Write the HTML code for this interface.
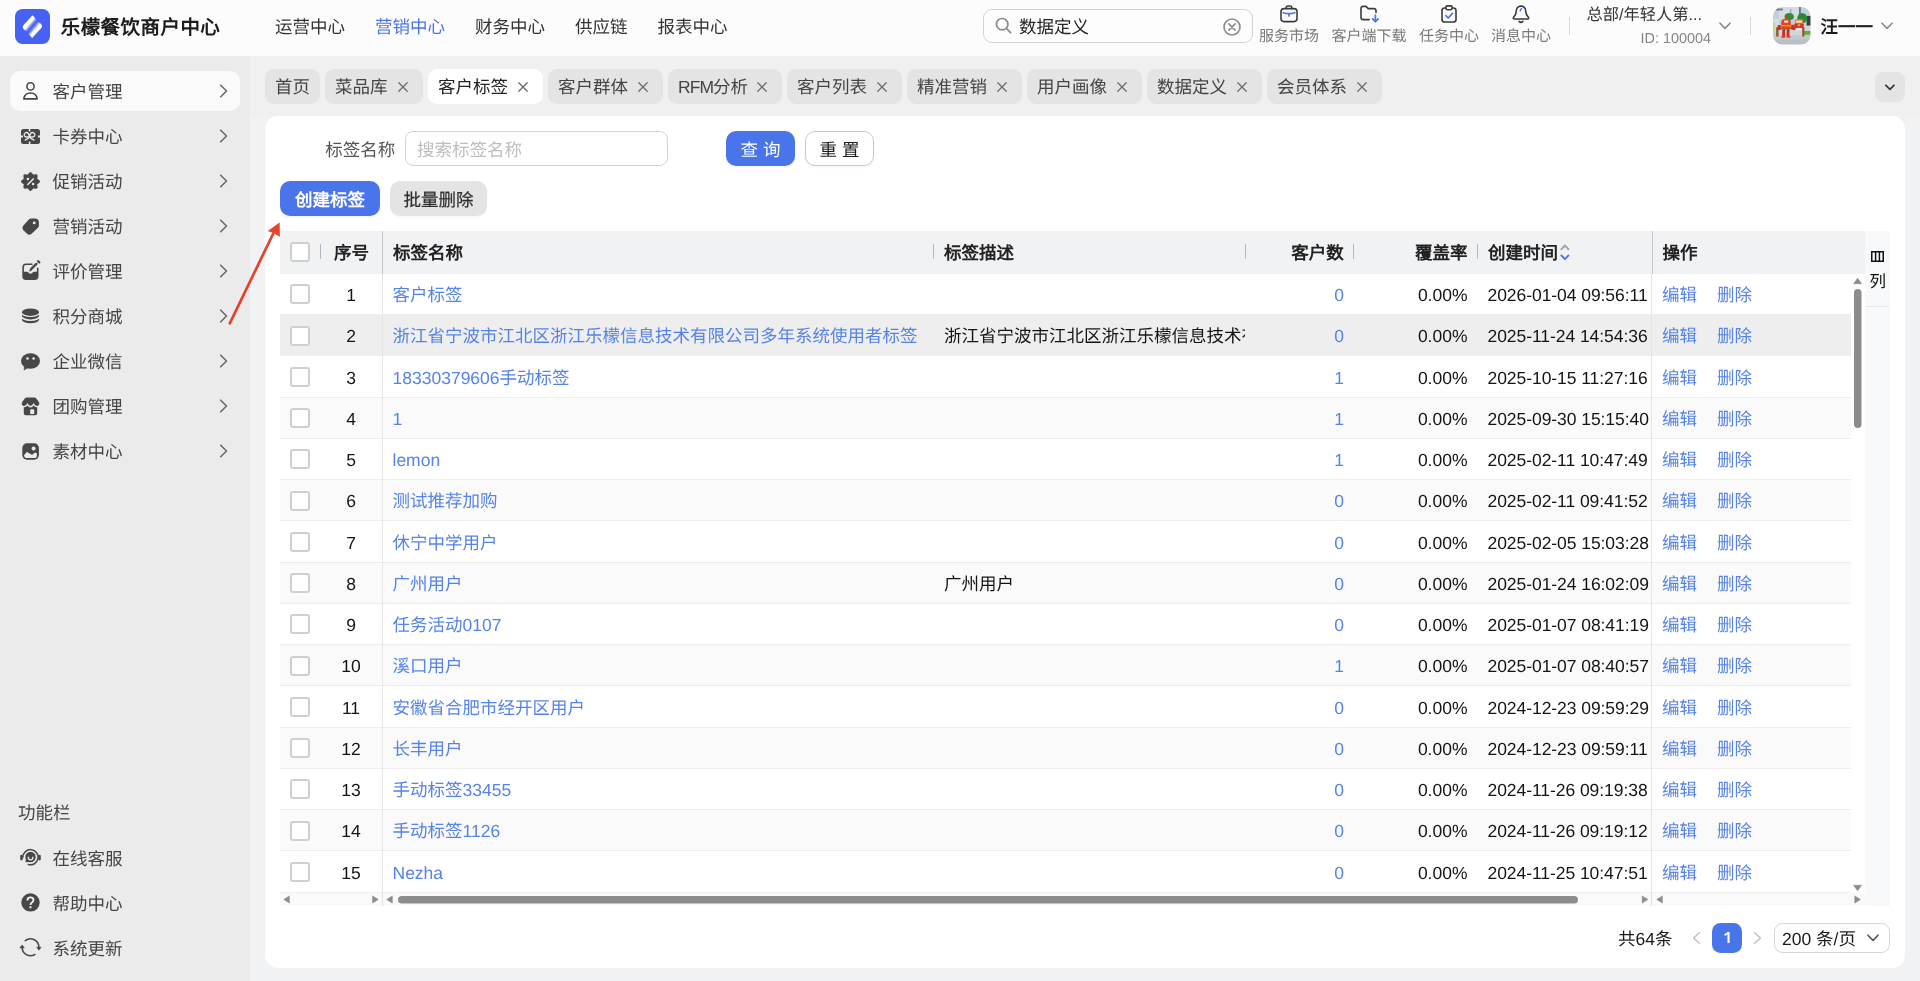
<!DOCTYPE html>
<html lang="zh-CN">
<head>
<meta charset="utf-8">
<title>乐檬餐饮商户中心</title>
<style>
*{box-sizing:border-box;margin:0;padding:0}
html,body{width:1920px;height:981px;overflow:hidden}
body{text-rendering:geometricPrecision;position:relative;background:#f1f2f4;font-family:"Liberation Sans",sans-serif;font-size:17.5px;line-height:20px;color:#1a1a1a}
#wrap{position:absolute;left:0;top:0;width:1920px;height:981px;will-change:transform}
.abs,#wrap>div,#wrap>span,#wrap>svg,#wrap>i{position:absolute}
span{white-space:nowrap}
svg{display:block;overflow:visible}
/* header */
#hdr{left:0;top:0;width:1920px;height:56px;background:#fcfcfc}
#logo{left:15px;top:9px;width:35px;height:35px}
#title{left:60.7px;top:16.4px;font-size:19.5px;line-height:24px;font-weight:bold;color:#1c1c1c;letter-spacing:0.45px}
.nav{top:17px;font-size:17.5px;line-height:20px;color:#333}
.nav.on{color:#4a74ea}
#search{left:983px;top:9px;width:270px;height:34px;border:1px solid #d4d4d4;border-radius:9px;background:#fdfdfd}
.hic{top:29px;font-size:15px;line-height:16px;color:#7a7a7a;text-align:center}
.vdiv{width:1px;height:18px;top:17px;background:#d9d9d9}
/* sidebar */
#side{left:0;top:56px;width:250px;height:925px;background:#ebebeb}
.mi{left:10px;width:230px;height:40px;border-radius:10px}
.mi.on{background:#fafafa}
.mi span{position:absolute;left:42.6px;top:11px;color:#444;font-size:17.5px;line-height:20px}
.mi svg.ic{position:absolute;left:10px;top:10px;width:20px;height:20px}
.mi svg.ch{position:absolute;left:209px;top:13px;width:8px;height:14px}
/* tabs */
#tabbar{left:250px;top:56px;width:1670px;height:60px;background:#f0f0f0}
.tab{top:69px;height:35px;border-radius:9px;background:#e4e4e4;color:#444}
.tab.on{background:#fff;color:#222}
.tab span{position:absolute;left:10px;top:7.5px;font-size:17.5px;line-height:20px}
.tab svg{position:absolute;right:14.6px;top:12.5px;width:10px;height:10px}
/* card */
#card{left:265px;top:116px;width:1640px;height:851.5px;background:#fff;border-radius:13px}
.btn{height:35px;border-radius:10px;text-align:center;font-size:17.5px;line-height:35px;padding-top:1.75px}
.pri{background:#4a74ea;color:#fff}
/* table */
#thead{left:280px;top:231px;width:1585px;height:42.75px;background:#f1f2f4}
.th{top:242.5px;font-weight:bold;font-size:17.5px;line-height:20px;color:#222}
.sep{top:244px;width:1px;height:15px;background:#b3b7c6}
.row{left:280px;width:1571px;height:41.25px;border-bottom:1px solid #eeeeee;background:#fff}
.row.alt{background:#fafafa}
.row.hov{background:#eeeeee}
.row span{position:absolute;top:11.25px;line-height:20px;font-size:17.5px;color:#141414}
.row .lk,.lk{color:#5683ea}
.cb{position:absolute;display:block;left:10px;top:10.5px;width:20px;height:20px;border:2px solid #cfcfcf;border-radius:3px;background:#fff}
.c-idx{left:40px;width:62px;text-align:center}
.c-name{left:112.5px}
.c-desc{left:664px;width:301px;overflow:hidden}
.c-cnt{left:966px;width:98px;text-align:right}
.c-rate{left:1073.5px;width:114px;text-align:right}
.c-date{left:1207.5px;letter-spacing:-0.06px}
.c-edit{left:1382px}
.c-del{left:1437px}
.vline{width:1px}

</style>
</head>
<body>
<div id="wrap">
<div id="hdr"></div>
<svg id="logo" viewBox="0 0 35 35">
  <defs>
    <linearGradient id="lg1" gradientUnits="userSpaceOnUse" x1="9.6" y1="15.6" x2="14.4" y2="19.6"><stop offset="0.5" stop-color="#fff"/><stop offset="0.68" stop-color="#fff" stop-opacity="0.6"/><stop offset="1" stop-color="#fff" stop-opacity="0.12"/></linearGradient>
    <linearGradient id="lg2" gradientUnits="userSpaceOnUse" x1="25.1" y1="19.6" x2="20.3" y2="15.6"><stop offset="0.5" stop-color="#fff"/><stop offset="0.68" stop-color="#fff" stop-opacity="0.6"/><stop offset="1" stop-color="#fff" stop-opacity="0.12"/></linearGradient>
  </defs>
  <rect width="35" height="35" rx="7.6" fill="#4762f2"/>
  <path d="M17.1 6.7 Q17.6 6.3 18.1 6.8 L21.2 10.4 Q21.7 11 21.2 11.6 L13.2 21.8 Q12.2 22.9 11.0 22.1 Q5.8 18.6 8.6 15.9 Z" fill="url(#lg1)"/>
  <path d="M17.6 28.5 Q17.1 28.9 16.6 28.4 L13.5 24.8 Q13 24.2 13.5 23.6 L21.5 13.4 Q22.5 12.3 23.7 13.1 Q28.9 16.6 26.1 19.3 Z" fill="url(#lg2)"/>
</svg>
<span id="title">乐檬餐饮商户中心</span>
<span class="nav" style="left:275px">运营中心</span>
<span class="nav on" style="left:375px">营销中心</span>
<span class="nav" style="left:475px">财务中心</span>
<span class="nav" style="left:575px">供应链</span>
<span class="nav" style="left:657.5px">报表中心</span>

<div id="search"></div>
<svg style="left:995px;top:17px;width:17px;height:17px" viewBox="0 0 17 17" fill="none" stroke="#8a8a8a" stroke-width="1.7" stroke-linecap="round"><circle cx="7.2" cy="7.2" r="5.7"/><path d="M11.6 11.6 L15.6 15.6"/></svg>
<span style="left:1019px;top:17px;font-size:17.5px;line-height:20px;color:#262626">数据定义</span>
<svg style="left:1223px;top:18px;width:18px;height:18px" viewBox="0 0 18 18" fill="none" stroke="#8f8f8f" stroke-width="1.7" stroke-linecap="round"><circle cx="9" cy="9" r="8"/><path d="M5.9 5.9 L12.1 12.1 M12.1 5.9 L5.9 12.1"/></svg>

<!-- header icon buttons -->
<svg style="left:1280px;top:5px;width:18px;height:18px" viewBox="0 0 18 18" fill="none" stroke-linecap="round" stroke-linejoin="round">
  <path d="M6.2 3.6 V2.6 Q6.2 1 7.8 1 H10.2 Q11.8 1 11.8 2.6 V3.6" stroke="#3a3a3a" stroke-width="1.6"/>
  <rect x="1" y="3.6" width="16" height="13" rx="3" stroke="#3a3a3a" stroke-width="1.6"/>
  <path d="M3.2 7.8 Q9 9.6 14.8 7.8 M9 9 V11" stroke="#4a74ea" stroke-width="1.7"/>
</svg>
<span class="hic" style="left:1259px;width:60px">服务市场</span>

<svg style="left:1360px;top:5px;width:19px;height:18px" viewBox="0 0 19 18" fill="none" stroke-linecap="round" stroke-linejoin="round">
  <path d="M9.2 14.6 H3.4 Q1 14.6 1 12.2 V3.6 Q1 1.4 3.2 1.4 H6 L8.2 3.6 H13.8 Q16 3.6 16 5.8 V7.4" stroke="#3a3a3a" stroke-width="1.6"/>
  <path d="M15.4 10 V16.4 M12.6 13.8 L15.4 16.6 L18.2 13.8" stroke="#4a74ea" stroke-width="1.7"/>
</svg>
<span class="hic" style="left:1331.5px;width:75px">客户端下载</span>

<svg style="left:1441px;top:5px;width:16px;height:18px" viewBox="0 0 16 18" fill="none" stroke-linecap="round" stroke-linejoin="round">
  <rect x="1" y="3" width="14" height="14" rx="2.6" stroke="#3a3a3a" stroke-width="1.6"/>
  <rect x="4.8" y="0.9" width="6.4" height="3.8" rx="1.6" stroke="#3a3a3a" stroke-width="1.6" fill="#fcfcfc"/>
  <path d="M4.8 10.6 L7.2 13 L11.4 8.4" stroke="#4a74ea" stroke-width="1.7"/>
</svg>
<span class="hic" style="left:1419px;width:60px">任务中心</span>

<svg style="left:1512px;top:5px;width:18px;height:19px" viewBox="0 0 18 19" fill="none" stroke-linecap="round" stroke-linejoin="round">
  <path d="M9 1 Q13.6 1.4 13.8 6.6 Q13.9 10.2 16.6 12.6 Q17 14 15.6 14 H2.4 Q1 14 1.4 12.6 Q4.1 10.2 4.2 6.6 Q4.4 1.4 9 1 Z" stroke="#3a3a3a" stroke-width="1.6"/>
  <path d="M7.2 16.4 Q9 18.4 10.8 16.4" stroke="#3a3a3a" stroke-width="1.6"/>
  <path d="M9.6 3.6 Q8.4 4.4 8.2 5.8" stroke="#4a74ea" stroke-width="1.5"/>
</svg>
<span class="hic" style="left:1491px;width:60px">消息中心</span>

<div class="vdiv" style="left:1569px"></div>
<span style="left:1586.5px;top:6px;font-size:16.25px;line-height:18px;color:#333">总部/年轻人第...</span>
<span style="left:1611px;width:100px;text-align:right;top:30.5px;font-size:14.4px;line-height:17px;color:#858585">ID: 100004</span>
<svg style="left:1719px;top:22px;width:12px;height:8px" viewBox="0 0 12 8" fill="none" stroke="#8a8a8a" stroke-width="1.6" stroke-linecap="round" stroke-linejoin="round"><path d="M1 1.2 L6 6.4 L11 1.2"/></svg>
<div class="vdiv" style="left:1750px"></div>

<!-- avatar -->
<svg style="left:1773px;top:7px;width:37.5px;height:37.5px" viewBox="0 0 38 38">
  <defs><clipPath id="avc"><rect width="38" height="38" rx="9.5"/></clipPath><filter id="avb" x="-5%" y="-5%" width="110%" height="110%"><feGaussianBlur stdDeviation="0.45"/></filter></defs>
  <g clip-path="url(#avc)"><g filter="url(#avb)">
    <rect x="-2" y="-2" width="42" height="42" fill="#bfd0da"/>
    <rect x="6" y="0" width="22" height="12" fill="#d3dde3"/>
    <rect x="-2" y="12" width="8" height="12" fill="#d5dfe3"/>
    <rect x="3" y="1.5" width="7" height="2" fill="#6f7a82"/>
    <rect x="26.5" y="0" width="1.6" height="9" fill="#59636a"/>
    <rect x="17.5" y="2" width="1" height="6" fill="#8b979e"/>
    <rect x="34" y="9" width="6" height="10" fill="#3d4248"/>
    <rect x="32" y="19" width="8" height="6" fill="#cfd6d8"/>
    <ellipse cx="16.4" cy="9.8" rx="4.8" ry="3.8" fill="#2f8c3a"/>
    <ellipse cx="29.6" cy="11.2" rx="5" ry="5.2" fill="#2d8737"/>
    <rect x="-1" y="15.5" width="3.2" height="9" fill="#bcd88e"/>
    <rect x="-2" y="28.8" width="42" height="12" fill="#c2c8cb"/>
    <rect x="-2" y="33" width="42" height="8" fill="#b9c0c4"/>
    <rect x="31.5" y="24.3" width="8" height="3.8" fill="#5fae3a"/>
    <rect x="4" y="24" width="27" height="4.6" fill="#d4d4d2"/>
    <rect x="3.2" y="20.5" width="2.4" height="9.4" fill="#8a5a2a"/>
    <rect x="29.6" y="20.5" width="2.2" height="9.4" fill="#8a5a2a"/>
    <rect x="5" y="21" width="25" height="1.6" fill="#9a6a34"/>
    <!-- right robot -->
    <rect x="22.2" y="12.4" width="8.2" height="5" rx="1.5" fill="#ea8a3c"/>
    <rect x="23.4" y="14" width="5.8" height="1.8" fill="#f3ece4"/>
    <rect x="21.6" y="16.6" width="9.4" height="5.4" rx="1" fill="#d2302a"/>
    <rect x="25" y="17.4" width="2.6" height="2.2" fill="#e8a32a"/>
    <rect x="22.8" y="21.2" width="6.6" height="2.6" fill="#efeae4"/>
    <rect x="19.6" y="19.6" width="3" height="3.6" fill="#cf2a28"/>
    <!-- left robot -->
    <rect x="12.3" y="8.2" width="2.6" height="3.6" fill="#d83a2a"/>
    <path d="M8.4 15.6 Q8.4 11.8 13.2 11.8 Q18 11.8 18 15.6 V21.4 Q18 22.8 16.6 22.8 H9.8 Q8.4 22.8 8.4 21.4Z" fill="#e2421a"/>
    <rect x="11.2" y="13.7" width="4.2" height="2.2" rx="0.6" fill="#f4efe8"/>
    <rect x="8.4" y="18.2" width="9.6" height="1.5" fill="#eaa324"/>
    <rect x="4.6" y="18.2" width="3.4" height="5" rx="1" fill="#d42a24"/>
    <rect x="18.4" y="18" width="3" height="4.6" rx="1" fill="#d42a24"/>
    <rect x="9.6" y="22.8" width="2.6" height="2.4" fill="#4a4a4a"/><rect x="14" y="22.8" width="2.6" height="2.4" fill="#4a4a4a"/>
    <rect x="9.3" y="24.8" width="3" height="5.2" fill="#d9261f"/><rect x="13.8" y="24.8" width="2.9" height="5.2" fill="#d9261f"/>
    <rect x="8.4" y="29.6" width="4.2" height="1.5" rx="0.7" fill="#ea3220"/><rect x="13.6" y="29.6" width="4.2" height="1.5" rx="0.7" fill="#ea3220"/>
  </g></g>
</svg>
<span style="left:1820.5px;top:17.3px;font-size:17.5px;line-height:20px;font-weight:bold;color:#1c1c1c">汪一一</span>
<svg style="left:1881px;top:22px;width:12px;height:8px" viewBox="0 0 12 8" fill="none" stroke="#8a8a8a" stroke-width="1.6" stroke-linecap="round" stroke-linejoin="round"><path d="M1 1.2 L6 6.4 L11 1.2"/></svg>

<div id="side"></div>
<div class="mi on" style="top:71px"><svg class="ic" viewBox="-0.5 0 20 20"><circle cx="10" cy="5.4" r="3.6" fill="none" stroke="#474747" stroke-width="1.6"/><path d="M3.3 17.9 C3.8 14 6.5 12 10 12 C13.5 12 16.2 14 16.7 17.9 Z" fill="none" stroke="#474747" stroke-width="1.6" stroke-linejoin="round"/></svg><span>客户管理</span><svg class="ch" viewBox="-0.7 0 8 14" fill="none" stroke="#6a6a6a" stroke-width="1.6" stroke-linecap="round" stroke-linejoin="round"><path d="M1 1.2 L6.8 7 L1 12.8"/></svg></div>
<div class="mi" style="top:116px"><svg class="ic" viewBox="-0.5 0 20 20"><path d="M3 3 H8.3 V5.4 H9.9 V3 H17 Q19.5 3 19.5 5.5 V9.4 H17.5 V11.6 H19.5 V15.5 Q19.5 18 17 18 H9.9 V15.6 H8.3 V18 H3 Q0.5 18 0.5 15.5 V11.6 H2.5 V9.4 H0.5 V5.5 Q0.5 3 3 3Z" fill="#474747"/>
  <g fill="none" stroke="#ebebeb" stroke-width="1.3" stroke-linecap="round" stroke-linejoin="round"><path d="M9 10.5 Q7.8 6 5.4 6.6 Q3 7.4 4 9.8 Q5.2 11.8 9 10.5 Q12.8 11.8 14 9.8 Q15 7.4 12.6 6.6 Q10.2 6 9 10.5Z"/><path d="M9 10.6 Q7.6 13.4 4.8 14 M9 10.6 Q10.4 13.4 13.4 14"/></g></svg><span>卡券中心</span><svg class="ch" viewBox="-0.7 0 8 14" fill="none" stroke="#6a6a6a" stroke-width="1.6" stroke-linecap="round" stroke-linejoin="round"><path d="M1 1.2 L6.8 7 L1 12.8"/></svg></div>
<div class="mi" style="top:161px"><svg class="ic" viewBox="-0.5 0 20 20"><path d="M10.00 2.60 L12.14 5.33 L15.59 4.91 L15.17 8.36 L17.90 10.50 L15.17 12.64 L15.59 16.09 L12.14 15.67 L10.00 18.40 L7.86 15.67 L4.41 16.09 L4.83 12.64 L2.10 10.50 L4.83 8.36 L4.41 4.91 L7.86 5.33Z" fill="#474747" stroke="#474747" stroke-width="3.1" stroke-linejoin="round"/><circle cx="7.4" cy="8.1" r="1.25" fill="#ebebeb"/><circle cx="12.6" cy="13.1" r="1.25" fill="#ebebeb"/><path d="M7.3 13.5 L12.7 7.9" stroke="#ebebeb" stroke-width="1.5" stroke-linecap="round"/></svg><span>促销活动</span><svg class="ch" viewBox="-0.7 0 8 14" fill="none" stroke="#6a6a6a" stroke-width="1.6" stroke-linecap="round" stroke-linejoin="round"><path d="M1 1.2 L6.8 7 L1 12.8"/></svg></div>
<div class="mi" style="top:206px"><svg class="ic" viewBox="-0.5 0 20 20"><path d="M8.8 2.9 Q9.6 2.4 10.6 2.4 H14.3 Q18.4 2.4 18.4 6.6 V9.4 Q18.4 10.9 17.2 12 L10.8 17.9 Q8.7 19.6 6.6 17.7 L2.9 14.2 Q1 11.9 2.9 9.5 Z" fill="#474747"/><circle cx="13.7" cy="6.9" r="1.4" fill="#ebebeb"/></svg><span>营销活动</span><svg class="ch" viewBox="-0.7 0 8 14" fill="none" stroke="#6a6a6a" stroke-width="1.6" stroke-linecap="round" stroke-linejoin="round"><path d="M1 1.2 L6.8 7 L1 12.8"/></svg></div>
<div class="mi" style="top:251px"><svg class="ic" viewBox="-0.5 0 20 20"><path d="M11.4 3.3 H5.6 Q2.6 3.3 2.6 6.3 V15.2 Q2.6 18.2 5.6 18.2 H14.2 Q17.2 18.2 17.2 15.2 V7.2" fill="none" stroke="#474747" stroke-width="1.6" stroke-linecap="round"/><path d="M2.6 10.8 H6.6 Q8.2 10.8 8.4 12.4 H11.6 Q11.8 10.8 13.4 10.8 H17.2 V15.2 Q17.2 18.2 14.2 18.2 H5.6 Q2.6 18.2 2.6 15.2Z" fill="#474747"/><path d="M10.6 8.2 L15.9 2.9" stroke="#474747" stroke-width="2.4" stroke-linecap="round"/><path d="M10.2 8.9 L9.6 9.6" stroke="#474747" stroke-width="1.6" stroke-linecap="round"/><path d="M17.6 0.2 L18.8 1.4" stroke="#474747" stroke-width="2.2" stroke-linecap="round"/></svg><span>评价管理</span><svg class="ch" viewBox="-0.7 0 8 14" fill="none" stroke="#6a6a6a" stroke-width="1.6" stroke-linecap="round" stroke-linejoin="round"><path d="M1 1.2 L6.8 7 L1 12.8"/></svg></div>
<div class="mi" style="top:296px"><svg class="ic" viewBox="-0.5 0 20 20"><defs><mask id="mk1" maskUnits="userSpaceOnUse" x="0" y="0" width="20" height="20"><rect width="20" height="20" fill="#fff"/><ellipse cx="10" cy="6.5" rx="9.8" ry="4.6" fill="#000"/></mask><mask id="mk2" maskUnits="userSpaceOnUse" x="0" y="0" width="20" height="20"><rect width="20" height="20" fill="#fff"/><ellipse cx="10" cy="10.4" rx="9.8" ry="4.6" fill="#000"/></mask></defs><ellipse cx="10" cy="6.2" rx="8.5" ry="3.7" fill="#474747"/><ellipse cx="10" cy="9.6" rx="8.6" ry="3.8" fill="#474747" mask="url(#mk1)"/><ellipse cx="10" cy="13.5" rx="8.6" ry="3.8" fill="#474747" mask="url(#mk2)"/></svg><span>积分商城</span><svg class="ch" viewBox="-0.7 0 8 14" fill="none" stroke="#6a6a6a" stroke-width="1.6" stroke-linecap="round" stroke-linejoin="round"><path d="M1 1.2 L6.8 7 L1 12.8"/></svg></div>
<div class="mi" style="top:341px"><svg class="ic" viewBox="-0.5 0 20 20"><ellipse cx="10" cy="10" rx="9.5" ry="7.7" fill="#474747"/><path d="M4 14.6 L3.6 19 L7.6 16.6Z" fill="#474747" stroke="#474747" stroke-width="0.6" stroke-linejoin="round"/><circle cx="7" cy="7.5" r="1.3" fill="#ebebeb"/><circle cx="13.1" cy="7.5" r="1.3" fill="#ebebeb"/></svg><span>企业微信</span><svg class="ch" viewBox="-0.7 0 8 14" fill="none" stroke="#6a6a6a" stroke-width="1.6" stroke-linecap="round" stroke-linejoin="round"><path d="M1 1.2 L6.8 7 L1 12.8"/></svg></div>
<div class="mi" style="top:386px"><svg class="ic" viewBox="-0.5 0 20 20"><path d="M5.9 1.6 H14.1 Q14.9 1.6 15.5 2.3 L18.4 6 Q19.2 7.2 18.6 8.4 Q17.9 10 16.3 10 Q14.6 10 13.1 7 Q11.8 10 10 10 Q8.2 10 7 7 Q5.4 10 3.7 10 Q2 10 1.4 8.4 Q0.9 7.2 1.7 6 L4.5 2.3 Q5.1 1.6 5.9 1.6Z" fill="#474747"/><path d="M3.3 11.3 Q5.5 11.6 7 9.6 Q8.3 11.5 10 11.5 Q11.7 11.5 13.1 9.6 Q14.6 11.6 16.7 11.3 V17.2 Q16.7 19.2 14.7 19.2 H5.3 Q3.3 19.2 3.3 17.2Z" fill="#474747"/><path d="M9.7 18 V14.3 Q9.7 13.3 10.7 13.3 H12.7 Q13.7 13.3 13.7 14.3 V18Z" fill="#ebebeb"/></svg><span>团购管理</span><svg class="ch" viewBox="-0.7 0 8 14" fill="none" stroke="#6a6a6a" stroke-width="1.6" stroke-linecap="round" stroke-linejoin="round"><path d="M1 1.2 L6.8 7 L1 12.8"/></svg></div>
<div class="mi" style="top:431px"><svg class="ic" viewBox="-0.5 0 20 20"><rect x="1.8" y="2.3" width="16.6" height="16.4" rx="4.6" fill="#474747"/><circle cx="13.1" cy="7.5" r="2" fill="#ebebeb"/><path d="M3.5 14.2 L5.8 11.4 Q6.6 10.6 7.4 11.4 L10.8 13.6 Q11.5 14 12.1 13.4 L13.8 11.9 Q14.7 11.3 15.7 11.9 L16.4 12.4 V14.4 Q16.4 17 13.8 17 H6.4 Q3.8 17 3.5 14.2Z" fill="#ebebeb"/></svg><span>素材中心</span><svg class="ch" viewBox="-0.7 0 8 14" fill="none" stroke="#6a6a6a" stroke-width="1.6" stroke-linecap="round" stroke-linejoin="round"><path d="M1 1.2 L6.8 7 L1 12.8"/></svg></div>
<span style="left:18px;top:803px;font-size:17.5px;line-height:20px;color:#444">功能栏</span>
<div class="mi" style="top:838px"><svg class="ic" viewBox="-0.5 0 20 20"><path d="M2.4 9.2 A7.6 7.6 0 1 1 7.8 16.5" fill="none" stroke="#474747" stroke-width="1.5" stroke-linecap="round"/><rect x="-0.3" y="6.8" width="2.6" height="5.6" rx="1.3" fill="#474747"/><rect x="17.7" y="6.8" width="2.6" height="5.6" rx="1.3" fill="#474747"/><circle cx="10" cy="9" r="5.2" fill="#474747"/><path d="M5.4 11 L5 14.2 L9 13.9Z" fill="#474747"/><path d="M7.8 9.2 Q7.9 11.9 10.1 11.9 Q12.3 11.9 12.4 9.2" fill="none" stroke="#ebebeb" stroke-width="1.3" stroke-linecap="round"/></svg><span>在线客服</span></div>
<div class="mi" style="top:883px"><svg class="ic" viewBox="-0.5 0 20 20"><circle cx="10" cy="9.4" r="9.2" fill="#474747"/><path d="M6.9 7.4 Q6.9 4.4 10 4.4 Q13 4.4 13 7 Q13 8.4 11.4 9.6 Q10 10.6 10 12" fill="none" stroke="#f2f2f2" stroke-width="1.8" stroke-linejoin="round"/><rect x="9" y="13.3" width="2" height="2" rx="0.4" fill="#f2f2f2"/></svg><span>帮助中心</span></div>
<div class="mi" style="top:928px"><svg class="ic" viewBox="-0.5 0 20 20"><g fill="none" stroke="#474747" stroke-width="1.5" stroke-linecap="round" stroke-linejoin="round"><path d="M4.8 2.7 A8.3 8.3 0 0 1 18.3 9.6"/><path d="M14.4 16.5 A8.3 8.3 0 0 1 1.7 9.2"/></g><path d="M16.2 9.2 H20.6 L18.4 12.2Z" fill="#474747" stroke="#474747" stroke-width="0.6" stroke-linejoin="round"/><path d="M-0.6 9.9 H3.8 L1.6 6.9Z" fill="#474747" stroke="#474747" stroke-width="0.6" stroke-linejoin="round"/></svg><span>系统更新</span></div>
<div id="tabbar"></div>
<div class="tab" style="left:265px;width:55px"><span>首页</span></div>
<div class="tab" style="left:325px;width:98px"><span>菜品库</span><svg viewBox="0 0 10 10" fill="none" stroke="#6b6b6b" stroke-width="1.3" stroke-linecap="round"><path d="M0.8 0.8 L9.2 9.2 M9.2 0.8 L0.8 9.2"/></svg></div>
<div class="tab on" style="left:428px;width:115px"><span>客户标签</span><svg viewBox="0 0 10 10" fill="none" stroke="#6b6b6b" stroke-width="1.3" stroke-linecap="round"><path d="M0.8 0.8 L9.2 9.2 M9.2 0.8 L0.8 9.2"/></svg></div>
<div class="tab" style="left:548px;width:114.75px"><span>客户群体</span><svg viewBox="0 0 10 10" fill="none" stroke="#6b6b6b" stroke-width="1.3" stroke-linecap="round"><path d="M0.8 0.8 L9.2 9.2 M9.2 0.8 L0.8 9.2"/></svg></div>
<div class="tab" style="left:668px;width:114px"><span><b style="font-weight:normal;letter-spacing:-0.95px">RFM</b>分析</span><svg viewBox="0 0 10 10" fill="none" stroke="#6b6b6b" stroke-width="1.3" stroke-linecap="round"><path d="M0.8 0.8 L9.2 9.2 M9.2 0.8 L0.8 9.2"/></svg></div>
<div class="tab" style="left:787px;width:115px"><span>客户列表</span><svg viewBox="0 0 10 10" fill="none" stroke="#6b6b6b" stroke-width="1.3" stroke-linecap="round"><path d="M0.8 0.8 L9.2 9.2 M9.2 0.8 L0.8 9.2"/></svg></div>
<div class="tab" style="left:907px;width:115px"><span>精准营销</span><svg viewBox="0 0 10 10" fill="none" stroke="#6b6b6b" stroke-width="1.3" stroke-linecap="round"><path d="M0.8 0.8 L9.2 9.2 M9.2 0.8 L0.8 9.2"/></svg></div>
<div class="tab" style="left:1027px;width:115px"><span>用户画像</span><svg viewBox="0 0 10 10" fill="none" stroke="#6b6b6b" stroke-width="1.3" stroke-linecap="round"><path d="M0.8 0.8 L9.2 9.2 M9.2 0.8 L0.8 9.2"/></svg></div>
<div class="tab" style="left:1147px;width:115px"><span>数据定义</span><svg viewBox="0 0 10 10" fill="none" stroke="#6b6b6b" stroke-width="1.3" stroke-linecap="round"><path d="M0.8 0.8 L9.2 9.2 M9.2 0.8 L0.8 9.2"/></svg></div>
<div class="tab" style="left:1267px;width:115px"><span>会员体系</span><svg viewBox="0 0 10 10" fill="none" stroke="#6b6b6b" stroke-width="1.3" stroke-linecap="round"><path d="M0.8 0.8 L9.2 9.2 M9.2 0.8 L0.8 9.2"/></svg></div>
<div style="left:1875px;top:72px;width:30px;height:30px;border-radius:8px;background:#e4e4e4"></div>
<svg style="left:1885px;top:84px;width:11px;height:7px" viewBox="0 0 11 7" fill="none" stroke="#3a3a3a" stroke-width="1.8" stroke-linecap="round" stroke-linejoin="round"><path d="M0.9 1.3 L4.9 5.4 L8.9 1.3"/></svg>
<div style="left:265px;top:116px;width:1640px;height:15px;background:#f0f0f0"></div>
<div id="card"></div>
<span style="left:325.2px;top:139.6px;color:#555;font-size:17.5px;line-height:20px">标签名称</span>
<div style="left:405px;top:131px;width:263px;height:35px;border:1px solid #d4d4d4;border-radius:8px;background:#fff"></div>
<span style="left:417px;top:139.6px;color:#bdbdbd;font-size:17.5px;line-height:20px">搜索标签名称</span>
<div class="btn pri" style="left:726px;top:131px;width:69px;box-shadow:0 2px 2px rgba(0,0,0,0.04)"><span style="letter-spacing:5px;margin-right:-5px">查询</span></div>
<div class="btn" style="left:805px;top:131px;width:69px;border:1px solid #c9c9c9;background:#fff;line-height:33px;color:#1c1c1c;box-shadow:0 2px 2px rgba(0,0,0,0.03)"><span style="letter-spacing:5px;margin-right:-5px">重置</span></div>
<div class="btn pri" style="left:280px;top:181px;width:100px;font-weight:bold;box-shadow:0 2px 2px rgba(0,0,0,0.04)">创建标签</div>
<div class="btn" style="left:390px;top:181px;width:97px;background:#e4e4e4;color:#303030;-webkit-text-stroke:0.22px #303030;box-shadow:0 2px 2px rgba(0,0,0,0.03)">批量删除</div>
<svg style="left:0;top:0;width:1920px;height:981px;pointer-events:none;z-index:50" viewBox="0 0 1920 981"><path d="M229.8 323.3 L274 232" stroke="#e8412a" stroke-width="2.7" stroke-linecap="round"/><path d="M279.3 223 L268.3 230.9 L273.7 232.7 L279.6 236.4 Z" fill="#e8412a" stroke="#e8412a" stroke-width="0.6" stroke-linejoin="round"/></svg>
<div id="thead"></div>
<i class="cb" style="left:290px;top:242px"></i>
<div class="sep" style="left:319.5px"></div>
<div class="sep" style="left:933px"></div>
<div class="sep" style="left:1245px"></div>
<div class="sep" style="left:1353px"></div>
<div class="sep" style="left:1477px"></div>
<span class="th" style="left:334px">序号</span>
<span class="th" style="left:393px">标签名称</span>
<span class="th" style="left:944px">标签描述</span>
<span class="th" style="left:1243.8px;width:100px;text-align:right">客户数</span>
<span class="th" style="left:1367.4px;width:100px;text-align:right">覆盖率</span>
<span class="th" style="left:1488px">创建时间</span>
<svg style="left:1560px;top:244px;width:10px;height:17px" viewBox="0 0 10 17" fill="none" stroke-width="1.9" stroke-linecap="round" stroke-linejoin="round"><path d="M1.3 5.3 L4.9 1.5 L8.5 5.3" stroke="#a3a3a3"/><path d="M1.3 11.4 L4.9 15.1 L8.5 11.4" stroke="#4a72ee"/></svg>
<span class="th" style="left:1662.4px">操作</span>
<div class="row" style="top:273.75px"><i class="cb"></i><span class="c-idx">1</span><span class="c-name lk">客户标签</span><span class="c-desc"></span><span class="c-cnt lk">0</span><span class="c-rate">0.00%</span><span class="c-date">2026-01-04 09:56:11</span><span class="c-edit lk">编辑</span><span class="c-del lk">删除</span></div>
<div class="row hov" style="top:315.0px"><i class="cb"></i><span class="c-idx">2</span><span class="c-name lk">浙江省宁波市江北区浙江乐檬信息技术有限公司多年系统使用者标签</span><span class="c-desc">浙江省宁波市江北区浙江乐檬信息技术有限公司多年系统使用者标签</span><span class="c-cnt lk">0</span><span class="c-rate">0.00%</span><span class="c-date">2025-11-24 14:54:36</span><span class="c-edit lk">编辑</span><span class="c-del lk">删除</span></div>
<div class="row" style="top:356.25px"><i class="cb"></i><span class="c-idx">3</span><span class="c-name lk">18330379606手动标签</span><span class="c-desc"></span><span class="c-cnt lk">1</span><span class="c-rate">0.00%</span><span class="c-date">2025-10-15 11:27:16</span><span class="c-edit lk">编辑</span><span class="c-del lk">删除</span></div>
<div class="row alt" style="top:397.5px"><i class="cb"></i><span class="c-idx">4</span><span class="c-name lk">1</span><span class="c-desc"></span><span class="c-cnt lk">1</span><span class="c-rate">0.00%</span><span class="c-date">2025-09-30 15:15:40</span><span class="c-edit lk">编辑</span><span class="c-del lk">删除</span></div>
<div class="row" style="top:438.75px"><i class="cb"></i><span class="c-idx">5</span><span class="c-name lk">lemon</span><span class="c-desc"></span><span class="c-cnt lk">1</span><span class="c-rate">0.00%</span><span class="c-date">2025-02-11 10:47:49</span><span class="c-edit lk">编辑</span><span class="c-del lk">删除</span></div>
<div class="row alt" style="top:480.0px"><i class="cb"></i><span class="c-idx">6</span><span class="c-name lk">测试推荐加购</span><span class="c-desc"></span><span class="c-cnt lk">0</span><span class="c-rate">0.00%</span><span class="c-date">2025-02-11 09:41:52</span><span class="c-edit lk">编辑</span><span class="c-del lk">删除</span></div>
<div class="row" style="top:521.25px"><i class="cb"></i><span class="c-idx">7</span><span class="c-name lk">休宁中学用户</span><span class="c-desc"></span><span class="c-cnt lk">0</span><span class="c-rate">0.00%</span><span class="c-date">2025-02-05 15:03:28</span><span class="c-edit lk">编辑</span><span class="c-del lk">删除</span></div>
<div class="row alt" style="top:562.5px"><i class="cb"></i><span class="c-idx">8</span><span class="c-name lk">广州用户</span><span class="c-desc">广州用户</span><span class="c-cnt lk">0</span><span class="c-rate">0.00%</span><span class="c-date">2025-01-24 16:02:09</span><span class="c-edit lk">编辑</span><span class="c-del lk">删除</span></div>
<div class="row" style="top:603.75px"><i class="cb"></i><span class="c-idx">9</span><span class="c-name lk">任务活动0107</span><span class="c-desc"></span><span class="c-cnt lk">0</span><span class="c-rate">0.00%</span><span class="c-date">2025-01-07 08:41:19</span><span class="c-edit lk">编辑</span><span class="c-del lk">删除</span></div>
<div class="row alt" style="top:645.0px"><i class="cb"></i><span class="c-idx">10</span><span class="c-name lk">溪口用户</span><span class="c-desc"></span><span class="c-cnt lk">1</span><span class="c-rate">0.00%</span><span class="c-date">2025-01-07 08:40:57</span><span class="c-edit lk">编辑</span><span class="c-del lk">删除</span></div>
<div class="row" style="top:686.25px"><i class="cb"></i><span class="c-idx">11</span><span class="c-name lk">安徽省合肥市经开区用户</span><span class="c-desc"></span><span class="c-cnt lk">0</span><span class="c-rate">0.00%</span><span class="c-date">2024-12-23 09:59:29</span><span class="c-edit lk">编辑</span><span class="c-del lk">删除</span></div>
<div class="row alt" style="top:727.5px"><i class="cb"></i><span class="c-idx">12</span><span class="c-name lk">长丰用户</span><span class="c-desc"></span><span class="c-cnt lk">0</span><span class="c-rate">0.00%</span><span class="c-date">2024-12-23 09:59:11</span><span class="c-edit lk">编辑</span><span class="c-del lk">删除</span></div>
<div class="row" style="top:768.75px"><i class="cb"></i><span class="c-idx">13</span><span class="c-name lk">手动标签33455</span><span class="c-desc"></span><span class="c-cnt lk">0</span><span class="c-rate">0.00%</span><span class="c-date">2024-11-26 09:19:38</span><span class="c-edit lk">编辑</span><span class="c-del lk">删除</span></div>
<div class="row alt" style="top:810.0px"><i class="cb"></i><span class="c-idx">14</span><span class="c-name lk">手动标签1126</span><span class="c-desc"></span><span class="c-cnt lk">0</span><span class="c-rate">0.00%</span><span class="c-date">2024-11-26 09:19:12</span><span class="c-edit lk">编辑</span><span class="c-del lk">删除</span></div>
<div class="row" style="top:851.25px"><i class="cb"></i><span class="c-idx">15</span><span class="c-name lk">Nezha</span><span class="c-desc"></span><span class="c-cnt lk">0</span><span class="c-rate">0.00%</span><span class="c-date">2024-11-25 10:47:51</span><span class="c-edit lk">编辑</span><span class="c-del lk">删除</span></div>
<div class="vline" style="left:382px;top:231px;height:43px;background:#c3c7cf"></div>
<div class="vline" style="left:382px;top:274px;height:632px;background:#e6e6e6"></div>
<div class="vline" style="left:1652px;top:231px;height:43px;background:#c3c7cf"></div>
<div class="vline" style="left:1651px;top:274px;height:632px;background:#e6e6e6"></div>
<div style="left:280px;top:893px;width:1585px;height:13px;background:#fafafa"></div>
<div class="vline" style="left:382px;top:893px;height:13px;background:#e0e0e0"></div>
<div class="vline" style="left:1651px;top:893px;height:13px;background:#e0e0e0"></div>
<svg style="left:0;top:0;width:1920px;height:981px" viewBox="0 0 1920 981" fill="#8c8c8c" stroke="#8c8c8c" stroke-width="0.6" stroke-linejoin="round"><path d="M289.40000000000003 895.9 L283.8 899.5 L289.40000000000003 903.1Z"/><path d="M372.59999999999997 895.9 L378.2 899.5 L372.59999999999997 903.1Z"/><path d="M392.3 895.9 L386.7 899.5 L392.3 903.1Z"/><path d="M1642.2 895.9 L1647.8 899.5 L1642.2 903.1Z"/><path d="M1662.3999999999999 895.9 L1656.8 899.5 L1662.3999999999999 903.1Z"/><path d="M1854.8 895.9 L1860.3999999999999 899.5 L1854.8 903.1Z"/><path d="M1853.6 283.7 L1857.6 278.3 L1861.6 283.7Z"/><path d="M1853.6 885.3 L1857.6 890.7 L1861.6 885.3Z"/><rect x="398" y="896" width="1180" height="7.5" rx="3.75" stroke="none"/><rect x="1854" y="289" width="7.5" height="139" rx="3.75" stroke="none"/></svg>
<div style="left:1865px;top:231px;width:25px;height:675px;background:#f8f9fb"></div>
<div style="left:1866px;top:305.5px;width:23px;height:1px;background:#e9e9ec"></div>
<svg style="left:1871px;top:251px;width:13px;height:11px" viewBox="0 0 13 11" fill="none" stroke="#111" stroke-width="1.5"><rect x="0.75" y="0.75" width="11.5" height="9.5"/><path d="M4.6 1 V10 M8.4 1 V10"/></svg>
<span style="left:1869.5px;top:271.5px;font-size:16.5px;line-height:20px;color:#111">列</span>
<span style="left:1618px;top:928.8px;font-size:17.5px;line-height:20px;color:#1a1a1a">共64条</span>
<svg style="left:1692px;top:932px;width:9px;height:12px" viewBox="0 0 9 12" fill="none" stroke="#bdbdbd" stroke-width="1.4" stroke-linecap="round" stroke-linejoin="round"><path d="M7.4 0.8 L1.6 6 L7.4 11.2"/></svg>
<div style="left:1712px;top:923px;width:30px;height:30px;border-radius:8.5px;background:#4a74ea;"><svg style="position:absolute;left:11.6px;top:9.2px;width:6px;height:11px" viewBox="0 0 6 11"><path d="M3.6 0 H5.6 V11 H3.5 V2.6 L0.9 4 L0.1 2.4 Z" fill="#fff"/></svg></div>
<svg style="left:1753px;top:932px;width:9px;height:12px" viewBox="0 0 9 12" fill="none" stroke="#bdbdbd" stroke-width="1.4" stroke-linecap="round" stroke-linejoin="round"><path d="M1.6 0.8 L7.4 6 L1.6 11.2"/></svg>
<div style="left:1774px;top:923px;width:116px;height:30px;border:1px solid #d4d4d4;border-radius:8.5px;background:#fff"></div>
<span style="left:1782px;top:929px;font-size:17.5px;line-height:20px;color:#1a1a1a">200 条/页</span>
<svg style="left:1867px;top:934px;width:12px;height:8px" viewBox="0 0 12 8" fill="none" stroke="#555" stroke-width="1.6" stroke-linecap="round" stroke-linejoin="round"><path d="M1 1.2 L6 6.4 L11 1.2"/></svg>
</div>
</body>
</html>
